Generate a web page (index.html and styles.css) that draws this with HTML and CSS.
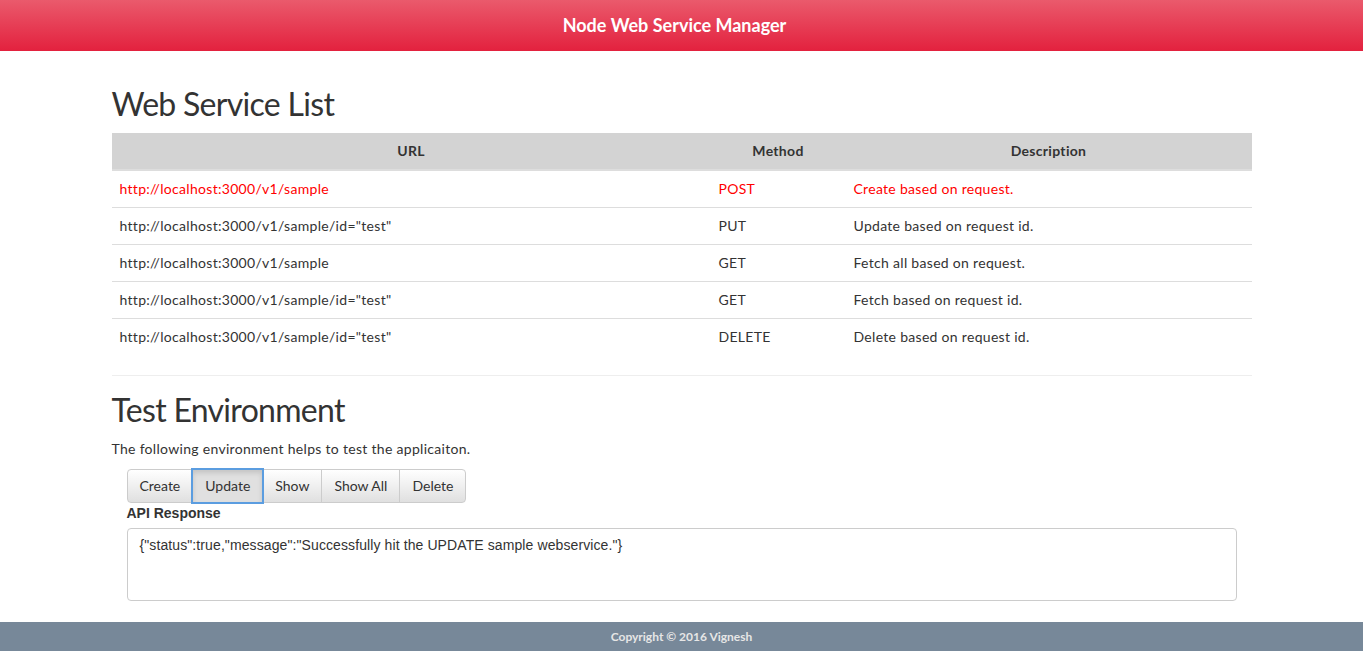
FILE: index.html
```html
<!DOCTYPE html>
<html lang="en">
<head>
<meta charset="utf-8">
<title>Node Web Service Manager</title>
<link rel="stylesheet" href="styles.css">
</head>
<body>
<header class="topbar">
  <span class="brand">Node Web Service Manager</span>
</header>
<main class="container">
  <h1 class="section-title">Web Service List</h1>
  <table class="service-table">
    <colgroup>
      <col class="col-url">
      <col class="col-method">
      <col class="col-desc">
    </colgroup>
    <thead>
      <tr><th>URL</th><th>Method</th><th>Description</th></tr>
    </thead>
    <tbody>
      <tr class="highlight"><td>http://localhost:3000/v1/sample</td><td>POST</td><td>Create based on request.</td></tr>
      <tr><td>http://localhost:3000/v1/sample/id="test"</td><td>PUT</td><td>Update based on request id.</td></tr>
      <tr><td>http://localhost:3000/v1/sample</td><td>GET</td><td>Fetch all based on request.</td></tr>
      <tr><td>http://localhost:3000/v1/sample/id="test"</td><td>GET</td><td>Fetch based on request id.</td></tr>
      <tr><td>http://localhost:3000/v1/sample/id="test"</td><td>DELETE</td><td>Delete based on request id.</td></tr>
    </tbody>
  </table>
  <hr class="divider">
  <h2 class="section-title sub">Test Environment</h2>
  <p class="intro">The following environment helps to test the applicaiton.</p>
  <div class="panel">
    <div class="btn-group">
      <button class="btn">Create</button>
      <button class="btn active">Update</button>
      <button class="btn">Show</button>
      <button class="btn">Show All</button>
      <button class="btn">Delete</button>
    </div>
    <label class="resp-label" for="resp">API Response</label>
    <textarea id="resp" class="resp-box">{"status":true,"message":"Successfully hit the UPDATE sample webservice."}</textarea>
  </div>
</main>
<footer class="footer">Copyright © 2016 Vignesh</footer>
</body>
</html>
```

FILE: styles.css
```css
* { box-sizing: border-box; }
html, body { margin: 0; padding: 0; }
body {
  font-family: "Lato", "Liberation Sans", sans-serif;
  font-size: 14px;
  line-height: 20px;
  letter-spacing: 0.3px;
  color: #333;
  background: #fff;
}
.topbar {
  height: 51px;
  background: linear-gradient(#ea5a6c, #e3213e);
  display: flex;
  align-items: center;
  justify-content: center;
  padding-right: 14px;
}
.brand {
  color: #fff;
  font-weight: bold;
  font-size: 18px;
  line-height: 20px;
  letter-spacing: 0;
  margin-top: -2px;
}
.container {
  width: 1140px;
  margin: 0 auto 21px;
}
.section-title {
  font-weight: normal;
  font-size: 32px;
  line-height: 40px;
  letter-spacing: -0.7px;
  margin: 33px 0 9px;
  color: #333;
}
.section-title.sub {
  margin: 14px 0 9px;
}
.service-table {
  width: 100%;
  border-collapse: collapse;
  margin-bottom: 20px;
}
.col-url { width: 599px; }
.col-method { width: 135px; }
.service-table th {
  background: #d3d3d3;
  font-weight: bold;
  text-align: center;
  padding: 8px;
  border-bottom: 2px solid #ddd;
}
.service-table td {
  padding: 8px;
  border-top: 1px solid #ddd;
  text-align: left;
}
.service-table tbody tr:first-child td { border-top: 0; }
.service-table tr.highlight td { color: #ff0000; }
.divider {
  border: 0;
  border-top: 1px solid #eee;
  margin: 0;
}
.intro { margin: 0 0 10px; }
.panel { padding: 0 15px; }
.btn-group { display: flex; }
.btn {
  font-family: inherit;
  font-size: 14px;
  line-height: 20px;
  letter-spacing: 0;
  color: #333;
  padding: 6px 12px;
  height: 34px;
  border: 1px solid #ccc;
  background: linear-gradient(#fff, #e0e0e0);
  margin-left: -1px;
  border-radius: 0;
  position: relative;
}
.btn:first-child { margin-left: 0; border-radius: 4px 0 0 4px; }
.btn:last-child { border-radius: 0 4px 4px 0; }
.btn.active {
  background: #e0e0e0;
  box-shadow: inset 0 3px 5px rgba(0,0,0,.125);
  outline: 2px solid #5b9de0;
  outline-offset: -1px;
  z-index: 2;
}
.resp-label {
  display: block;
  font-family: "Liberation Sans", Arial, sans-serif;
  font-weight: bold;
  letter-spacing: 0;
  margin-bottom: 5px;
}
.resp-box {
  display: block;
  width: 100%;
  height: 73px;
  padding: 6px 12px;
  font-family: "Liberation Sans", Arial, sans-serif;
  font-size: 14px;
  line-height: 20px;
  letter-spacing: 0.1px;
  color: #333;
  border: 1px solid #ccc;
  border-radius: 4px;
  resize: none;
}
.footer {
  height: 29px;
  background: #778899;
  color: #e6e6e6;
  font-weight: bold;
  font-size: 12px;
  line-height: 29px;
  letter-spacing: 0;
  text-align: center;
}
```
